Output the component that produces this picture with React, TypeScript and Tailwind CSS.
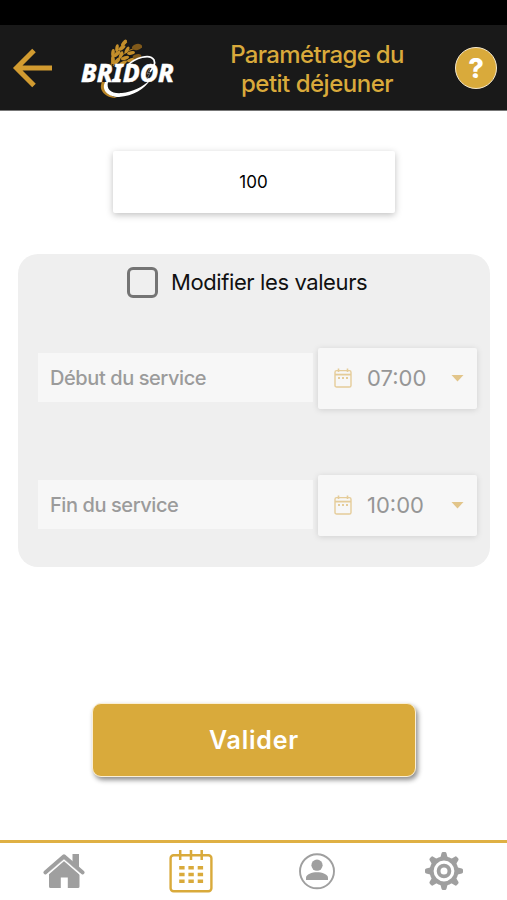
import React, { useState } from 'react';

interface TimeRowProps {
    label: string;
    time: string;
}

function BridorLogo() {
    return (
        <svg width="100" height="64" viewBox="0 0 100 64" className="shrink-0 overflow-visible">
            {/* Wheat ears */}
            <g fill="none" stroke="#a97820" strokeWidth="1.2">
                <path d="M35 30C36 20 43 11 51 6" />
                <path d="M37 30C44 19 53 12 66 11" />
                <path d="M42 31C49 25 57 21 65 21" />
            </g>
            <g fill="#c48f2b">
                <ellipse cx="37" cy="24" rx="1.9" ry="4.4" transform="rotate(-4 37 24)" />
                <ellipse cx="37" cy="17" rx="1.8" ry="4" transform="rotate(5 37 17)" />
                <ellipse cx="41" cy="18" rx="1.8" ry="4.2" transform="rotate(48 41 18)" />
                <ellipse cx="41" cy="12" rx="1.7" ry="3.8" transform="rotate(8 41 12)" />
                <ellipse cx="46" cy="12" rx="1.7" ry="4" transform="rotate(55 46 12)" />
                <ellipse cx="48" cy="7" rx="1.8" ry="4" transform="rotate(40 48 7)" />
                <ellipse cx="41" cy="25" rx="1.9" ry="4.2" transform="rotate(42 41 25)" />
                <ellipse cx="45" cy="19" rx="1.8" ry="4" transform="rotate(20 45 19)" />
                <ellipse cx="49" cy="22" rx="1.8" ry="4.2" transform="rotate(72 49 22)" />
                <ellipse cx="51" cy="14" rx="1.7" ry="3.8" transform="rotate(30 51 14)" />
                <ellipse cx="55" cy="17" rx="1.7" ry="4" transform="rotate(78 55 17)" />
                <ellipse cx="47" cy="27" rx="1.7" ry="4" transform="rotate(65 47 27)" />
                <ellipse cx="55" cy="24" rx="1.7" ry="4" transform="rotate(70 55 24)" />
            </g>
            <ellipse cx="61" cy="11" rx="5.2" ry="3" fill="#80591a" transform="rotate(-12 61 11)" />
            <ellipse cx="61" cy="20.5" rx="4.4" ry="2.4" fill="#80591a" transform="rotate(-12 61 20.5)" />
            {/* Swoosh around the name */}
            <path d="M26 46C22 54 29 62 41 62C32 59 27 54 29 46Z" fill="#b98527" />
            <path
                d="M29 46C25 54 32 61 43 61C57 60 69 53 74 44C67 51 56 56 46 57C36 58 30 54 32 46Z"
                fill="#fff"
            />
            <path d="M52 29C59 22 74 17 78 24C80 28 77 32 74 36" fill="none" stroke="#fff" strokeWidth="1.7" />
            <text
                x="5"
                y="46.3"
                fill="#fff"
                stroke="#fff"
                strokeWidth="0.4"
                fontFamily="'Noto Sans', 'Open Sans', sans-serif"
                fontSize="24.5"
                fontStyle="italic"
                fontWeight="800"
                textLength="93"
                lengthAdjust="spacingAndGlyphs"
            >
                BRIDOR
            </text>
            <path d="M74 32L71 38L74 37L71 43" fill="none" stroke="#777" strokeWidth="0.9" />
        </svg>
    );
}

function CalendarIcon() {
    return (
        <svg width="18" height="20" viewBox="0 0 18 20" fill="none" stroke="#e5cc99" className="mb-px shrink-0">
            <rect x="1" y="2.6" width="16" height="16.4" rx="1.6" strokeWidth="1.4" />
            <path d="M1 6.6H17" strokeWidth="1.8" />
            <path d="M4.5 0.5V4M13.5 0.5V4" strokeWidth="1.6" />
            <path d="M4 10H6M8 10H10M12 10H14" strokeWidth="1.8" />
        </svg>
    );
}

function TimeRow({ label, time }: TimeRowProps) {
    return (
        <div className="flex items-center gap-[5px]">
            <div className="mb-[2px] flex h-[49px] w-[275px] items-center bg-[#f7f7f7] pl-3 text-[20px] font-medium tracking-[-0.42px] text-[#9b9b9b]">
                {label}
            </div>
            <button className="flex h-[61px] w-[159px] items-center rounded-[2px] bg-[#f7f7f7] pl-4 shadow-[0_1px_6px_rgba(0,0,0,0.13)]">
                <CalendarIcon />
                <span className="ml-[15px] w-[84px] text-left text-[22px] text-[#969696]">{time}</span>
                <svg width="13" height="7" viewBox="0 0 13 7">
                    <path d="M0.5 0H12.5L6.5 6.5Z" fill="#e2c58a" />
                </svg>
            </button>
        </div>
    );
}

function HomeIcon() {
    return (
        <svg width="44" height="44" viewBox="0 0 44 44" fill="#9f9f9f">
            <path d="M30.5 5H37V19L30.5 13Z" />
            <path d="M22 9.8L37.5 23.5V37.5Q37.5 39 36 39H25.8V28.5H18.8V39H8.5Q7 39 7 37.5V23.5Z" />
            {/* White gap between the roof and the walls */}
            <path d="M4.5 26.4L22 11.2L39.5 26.4" fill="none" stroke="#fff" strokeWidth="1.4" />
            <path
                d="M3.3 23.5L22 7.2L40.7 23.5"
                fill="none"
                stroke="#9f9f9f"
                strokeWidth="3.8"
                strokeLinejoin="round"
                strokeLinecap="round"
            />
        </svg>
    );
}

function PlanningIcon() {
    return (
        <svg width="44" height="44" viewBox="0 0 44 44" fill="none" stroke="#d9aa3b">
            <rect x="1.6" y="6.3" width="40.8" height="36" rx="3" strokeWidth="2.4" />
            <path d="M11.2 1V11M22 1V11M32.7 1V11" strokeWidth="2.5" />
            <path
                d="M10.2 18.8H15.6M19.4 18.8H24.8M28.7 18.8H34.1M10.2 25.5H15.6M19.4 25.5H24.8M28.7 25.5H34.1M10.2 32.2H15.6M19.4 32.2H24.8M28.7 32.2H34.1"
                strokeWidth="3.6"
            />
        </svg>
    );
}

function ProfileIcon() {
    return (
        <svg width="44" height="44" viewBox="0 0 44 44" fill="#9f9f9f">
            <circle cx="22" cy="22.3" r="17" fill="none" stroke="#9f9f9f" strokeWidth="1.9" />
            <circle cx="22" cy="16.2" r="5.6" />
            <path d="M11 31.1V28.8C11 25.1 17 23.2 22 23.2S33 25.1 33 28.8V31.1Z" />
        </svg>
    );
}

function SettingsIcon() {
    return (
        <svg width="44" height="44" viewBox="0 0 44 44" fill="none" stroke="#9f9f9f">
            <circle cx="22" cy="22" r="12.4" strokeWidth="4" />
            <circle cx="22" cy="22" r="5.4" strokeWidth="3.8" />
            {[0, 45, 90, 135, 180, 225, 270, 315].map(angle => (
                <path
                    key={angle}
                    d="M18 10L19.5 4.2Q19.8 3 21 3H23Q24.2 3 24.5 4.2L26 10Z"
                    fill="#9f9f9f"
                    stroke="none"
                    transform={`rotate(${angle} 22 22)`}
                />
            ))}
        </svg>
    );
}

export default function App() {
    const [editable, setEditable] = useState(false);

    return (
        <div className="flex h-[900px] w-[507px] flex-col overflow-hidden bg-white font-['Inter','Liberation_Sans',sans-serif]">
            {/* Status bar */}
            <div className="h-[25px] shrink-0 bg-black" />

            <header className="flex h-[86px] shrink-0 items-center border-b border-[#777] bg-[#191919] pl-3">
                <button aria-label="Retour">
                    <svg width="42" height="40" viewBox="0 0 42 40" fill="none" stroke="#d29b30" strokeWidth="5">
                        <path d="M22 2.5L4.5 20L22 37.5M4.5 20H40" />
                    </svg>
                </button>
                <div className="ml-[22px]">
                    <BridorLogo />
                </div>
                <h1 className="ml-[41px] w-[200px] pt-[2px] text-center text-[24px] leading-[29px] font-medium tracking-[-0.65px] text-[#d9aa3b]">
                    Paramétrage du
                    <br />
                    <span className="tracking-[-0.5px]">petit déjeuner</span>
                </h1>
                <button className="ml-[38px] flex h-[42px] w-[42px] items-center justify-center rounded-full border-[1.5px] border-[#f6e9cd] bg-[#d9aa3b] pt-[3px] text-[27px] font-extrabold text-white">
                    ?
                </button>
            </header>

            <main className="flex flex-1 flex-col items-center">
                <div className="mt-10 flex h-[62px] w-[282px] items-center justify-center rounded-[2px] bg-white pt-px text-[17px] text-black shadow-[0_2px_7px_rgba(0,0,0,0.25)]">
                    100
                </div>

                <section className="mt-[41px] mr-[-1px] h-[313px] w-[472px] rounded-[20px] bg-[#efefef] pt-[13px] pl-5">
                    <div className="flex h-[31px] items-center pl-[89px]">
                        <button
                            role="checkbox"
                            aria-checked={editable}
                            aria-label="Modifier les valeurs"
                            onClick={() => setEditable(!editable)}
                            className="h-[31px] w-[31px] rounded-[6px] border-[3px] border-[#747474]"
                        />
                        <span className="ml-[13px] text-[22px] tracking-[-0.4px] text-[#111]">Modifier les valeurs</span>
                    </div>
                    <div className="mt-[50px] flex flex-col gap-[66px]">
                        <TimeRow label="Début du service" time="07:00" />
                        <TimeRow label="Fin du service" time="10:00" />
                    </div>
                </section>

                <button className="mt-[136px] mr-[-1px] h-[74px] w-[324px] rounded-[9px] border-[1.5px] border-[#fbefd5] bg-[#d9aa3b] pt-px text-[25px] font-semibold tracking-[0.8px] text-white shadow-[2px_3px_5px_rgba(0,0,0,0.45)]">
                    Valider
                </button>
            </main>

            <nav className="flex h-[60px] shrink-0 justify-around border-t-[3px] border-[#dfb044] bg-white pt-[6px] pl-px">
                <HomeIcon />
                <PlanningIcon />
                <ProfileIcon />
                <SettingsIcon />
            </nav>
        </div>
    );
}
